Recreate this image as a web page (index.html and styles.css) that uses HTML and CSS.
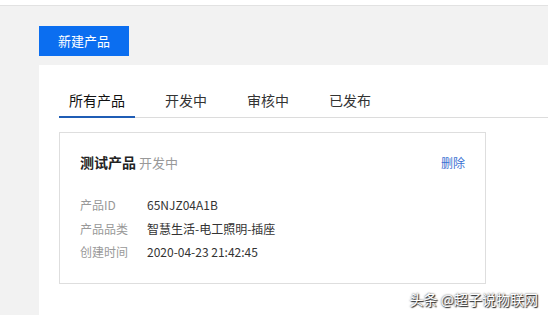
FILE: index.html
```html
<!DOCTYPE html>
<html>
<head>
    <title>产品列表</title>
    <link rel="stylesheet" href="styles.css">
</head>
<body>
    <div class="topbar"></div>
    <div class="page">
        <div class="toolbar">
            <a href="#" class="create-button">新建产品</a>
        </div>
        <div class="panel">
            <div class="tabs">
                <a href="#" class="tab active">所有产品</a>
                <a href="#" class="tab">开发中</a>
                <a href="#" class="tab">审核中</a>
                <a href="#" class="tab">已发布</a>
            </div>
            <div class="card">
                <div class="card-head">
                    <span class="card-title">测试产品</span>
                    <span class="card-status">开发中</span>
                    <a href="#" class="delete-link">删除</a>
                </div>
                <div class="info-row">
                    <span class="info-label">产品ID</span>
                    <span class="info-value">65NJZ04A1B</span>
                </div>
                <div class="info-row">
                    <span class="info-label">产品品类</span>
                    <span class="info-value">智慧生活-电工照明-插座</span>
                </div>
                <div class="info-row">
                    <span class="info-label">创建时间</span>
                    <span class="info-value">2020-04-23 21:42:45</span>
                </div>
            </div>
        </div>
    </div>
    <div class="watermark">头条 @超子说物联网</div>
</body>
</html>
```

FILE: styles.css
```css
html, body {
    margin: 0;
    height: 100%;
    overflow: hidden;
}
body {
    font-family: "Noto Sans CJK SC", "Liberation Sans", sans-serif;
    background-color: #f2f2f2;
    color: #333;
    position: relative;
}
.topbar {
    height: 5px;
    background-color: #fff;
    border-bottom: 1px solid #e2e2e2;
}
.page {
    padding: 20px 0 0 39px;
}
.toolbar {
    display: flex;
    margin-bottom: 9px;
}
.create-button {
    display: block;
    width: 90px;
    height: 30px;
    line-height: 30px;
    background-color: #0b6ef0;
    color: #fff;
    font-size: 13px;
    text-align: center;
    text-decoration: none;
}
.panel {
    box-sizing: border-box;
    background-color: #fff;
    padding: 18px 0 0 20px;
    height: 250px;
}
.tabs {
    display: flex;
    gap: 20px;
    border-bottom: 1px solid #dcdcdc;
    margin-bottom: 14px;
}
.tab {
    display: block;
    padding: 7px 10px 6px;
    font-size: 14px;
    line-height: 20px;
    color: #333;
    text-decoration: none;
    border-bottom: 2px solid transparent;
    margin-bottom: -1px;
}
.tab.active {
    color: #111;
    border-bottom-color: #1f5db5;
}
.card {
    width: 385px;
    height: 133px;
    border: 1px solid #dedede;
    padding: 17px 20px 0 20px;
}
.card-head {
    display: flex;
    align-items: baseline;
    height: 24px;
    line-height: 24px;
    margin-bottom: 19px;
}
.card-title {
    font-size: 14px;
    font-weight: bold;
    color: #222;
}
.card-status {
    font-size: 13px;
    color: #999;
    margin-left: 3px;
}
.delete-link {
    margin-left: auto;
    font-size: 12px;
    color: #3a6fd2;
    text-decoration: none;
}
.info-row {
    display: flex;
    font-size: 12px;
    line-height: 23.5px;
}
.info-label {
    width: 67px;
    color: #999;
}
.info-value {
    color: #333;
}
.watermark {
    position: absolute;
    right: 10px;
    bottom: 6px;
    font-size: 14px;
    color: #fff;
    text-shadow: 0 0 2px #333, 1px 1px 1px #222;
}
```
